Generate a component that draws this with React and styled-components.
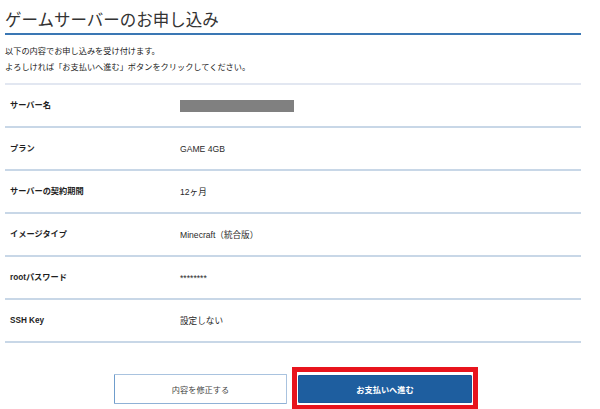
import styled, { createGlobalStyle } from "styled-components"

const Global = createGlobalStyle`
    body {
        margin: 0;
        background: #fff;
        font-family: "Liberation Sans", "Noto Sans CJK JP", sans-serif;
        color: #333;
    }
`

const Page = styled.div`
    width: 576px;
    padding: 0 5px;
`

const Title = styled.h2`
    margin: 0;
    padding: 8px 0 2px;
    font-family: "Noto Sans CJK JP", sans-serif;
    font-size: 16.5px;
    line-height: 23px;
    font-weight: 400;
    color: #333;
    border-bottom: 2px solid #3a77b4;
`

const Lead = styled.p`
    margin: 9px 0 7px;
    font-size: 8.2px;
    line-height: 16px;
    color: #222;
`

const Table = styled.div`
    border-top: 2px solid #e2e7f1;
`

const Row = styled.div`
    display: grid;
    grid-template-columns: 175px 1fr;
    align-items: center;
    height: 41px;
    line-height: 12px;
    border-bottom: 2px solid #c8d7e7;
`

const Label = styled.div`
    padding-left: 5px;
    font-size: 8.2px;
    font-weight: 700;
    color: #1e1e1e;
`

const Value = styled.div`
    font-size: 8.6px;
    color: #2a2a2a;
`

const Masked = styled.div`
    width: 114px;
    height: 12px;
    background: #808080;
`

const Actions = styled.div`
    display: flex;
    justify-content: center;
    align-items: center;
    gap: 5px;
    margin-top: 24px;
    padding-left: 6px;
`

const Button = styled.button`
    font-family: inherit;
    font-size: 8.2px;
    cursor: pointer;
    width: ${p => p.$primary ? "174px" : "173px"};
    height: ${p => p.$primary ? "28px" : "30px"};
    border: 1px solid ${p => p.$primary ? "#1a5796" : "#a9c3df"};
    border-left-color: ${p => p.$primary ? "#1a5796" : "#6f9dcc"};
    border-bottom-color: ${p => p.$primary ? "#1a5796" : "#8fb1d6"};
    background: ${p => p.$primary ? "#1e5e9f" : "#fff"};
    color: ${p => p.$primary ? "#fff" : "#444"};
    font-weight: ${p => p.$primary ? 700 : 400};
    border-radius: 1px;
    padding: 0;
`

const Highlight = styled.div`
    border: 5px solid #e8141d;
    padding: 3px 1px 2px;
    background: #fff;
`

const rows = [
    ["サーバー名", <Masked />],
    ["プラン", "GAME 4GB"],
    ["サーバーの契約期間", "12ヶ月"],
    ["イメージタイプ", "Minecraft（統合版）"],
    ["rootパスワード", "********"],
    ["SSH Key", "設定しない"],
]

const App = () => {
    return (
        <Page>
            <Global />
            <Title>ゲームサーバーのお申し込み</Title>
            <Lead>
                以下の内容でお申し込みを受け付けます。<br />
                よろしければ「お支払いへ進む」ボタンをクリックしてください。
            </Lead>
            <Table>
                {rows.map(([label, value]) => (
                    <Row key={label}>
                        <Label>{label}</Label>
                        <Value>{value}</Value>
                    </Row>
                ))}
            </Table>
            <Actions>
                <Button>内容を修正する</Button>
                <Highlight>
                    <Button $primary>お支払いへ進む</Button>
                </Highlight>
            </Actions>
        </Page>
    )
}

export default App
